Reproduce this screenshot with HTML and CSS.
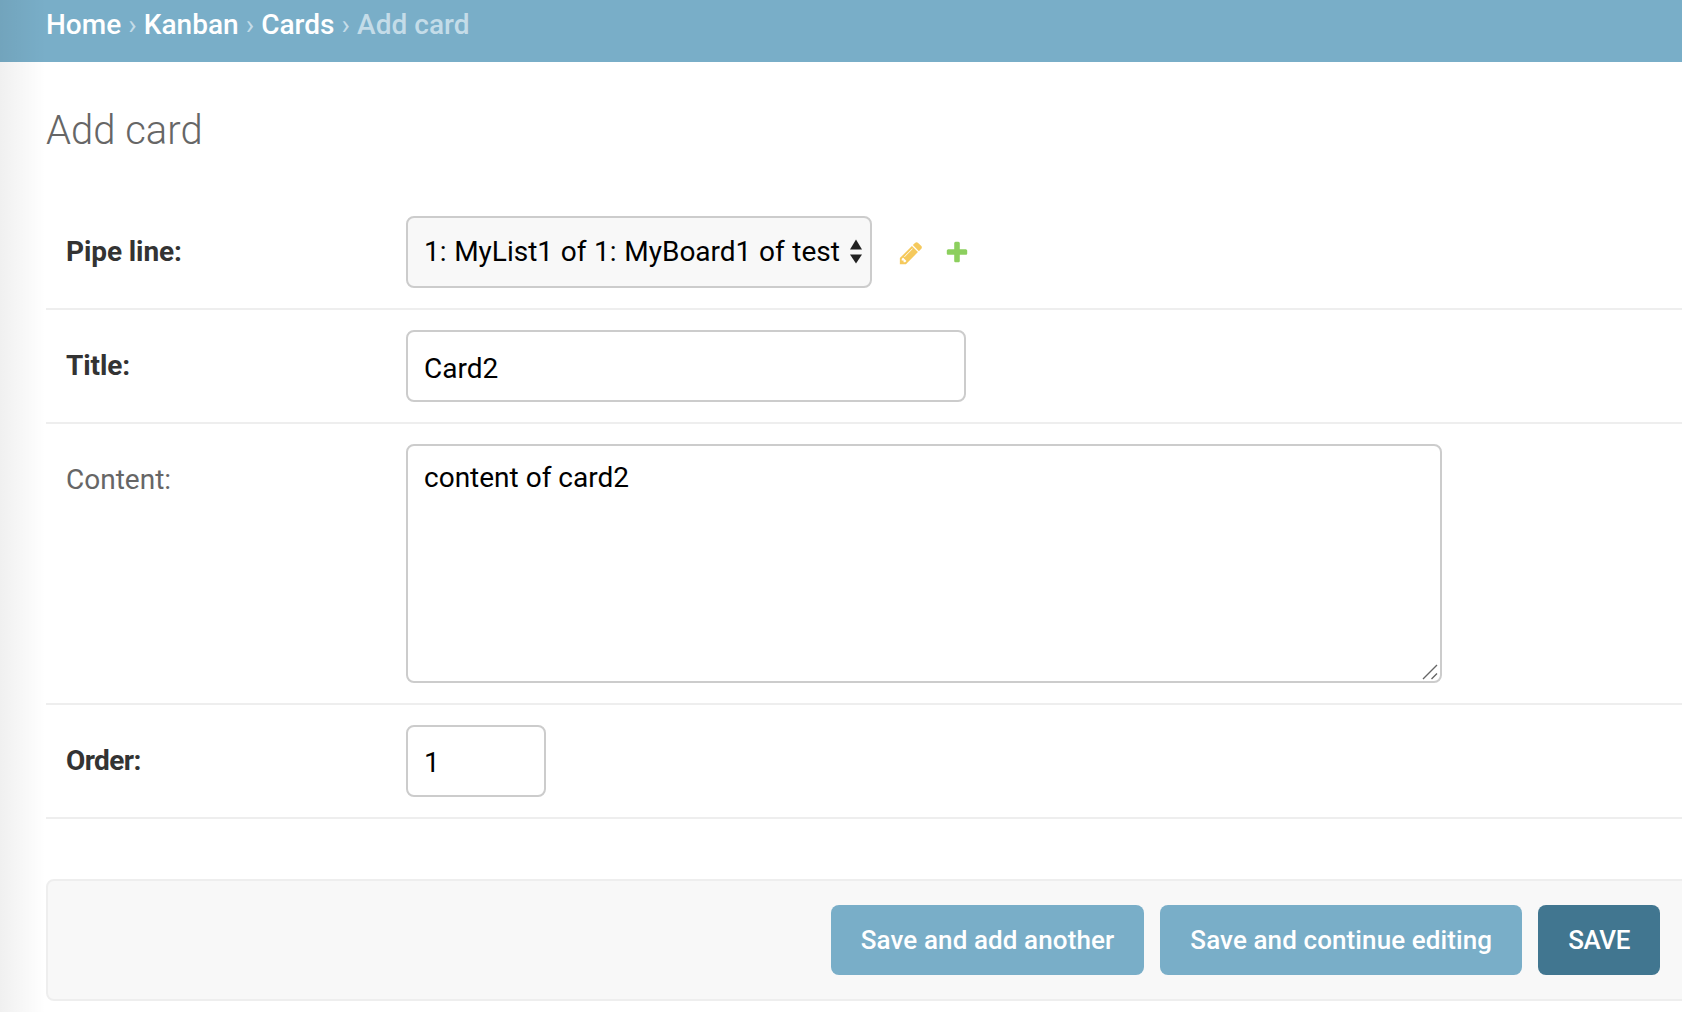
FILE: index.html
```html
<!DOCTYPE html>
<html>
<head>
    <meta charset="UTF-8">
    <meta name="viewport" content="width=device-width, initial-scale=1.0">
    <title>Add card</title>
    <link rel="stylesheet" href="styles.css">
</head>
<body>
    <div class="breadcrumbs">
        <a href="#">Home</a> <span class="sep">›</span>
        <a href="#">Kanban</a> <span class="sep">›</span>
        <a href="#">Cards</a> <span class="sep">›</span>
        <span class="current">Add card</span>
    </div>

    <div class="content">
        <h1>Add card</h1>

        <form>
            <div class="form-row">
                <label class="required">Pipe line:</label>
                <div class="select-wrap">
                    <select class="field field-select">
                        <option>1: MyList1 of 1: MyBoard1 of test</option>
                    </select>
                    <svg class="select-arrows" viewBox="0 0 12 24">
                        <path d="M6 0l6 10H0z"/>
                        <path d="M0 15h12l-6 9z"/>
                    </svg>
                </div>
                <a href="#" class="related related-change"><svg class="icon-change" viewBox="0 0 1792 1792"><path d="M491 1536l91-91-235-235-91 91v107h128v128h107zm523-928q0-22-22-22-10 0-17 7l-542 542q-7 7-7 17 0 22 22 22 10 0 17-7l542-542q7-7 7-17zm-54-192l416 416-832 832h-416v-416zm683 96q0 53-37 90l-166 166-416-416 166-165q36-38 90-38 53 0 91 38l235 234q37 39 37 91z"/></svg></a>
                <a href="#" class="related"><svg class="icon-add" viewBox="0 0 1792 1792"><path d="M1600 736v192q0 40-28 68t-68 28h-416v416q0 40-28 68t-68 28h-192q-40 0-68-28t-28-68v-416h-416q-40 0-68-28t-28-68v-192q0-40 28-68t68-28h416v-416q0-40 28-68t68-28h192q40 0 68 28t28 68v416h416q40 0 68 28t28 68z"/></svg></a>
            </div>

            <div class="form-row">
                <label class="required">Title:</label>
                <input class="field field-title" type="text" value="Card2">
            </div>

            <div class="form-row row-top">
                <label class="label-content">Content:</label>
                <div class="textarea-wrap">
                    <textarea class="field field-content">content of card2</textarea>
                    <svg class="grip" viewBox="0 0 16 16">
                        <path d="M1 15L15 1M9.5 15L15 9.5"/>
                    </svg>
                </div>
            </div>

            <div class="form-row">
                <label class="required label-order">Order:</label>
                <input class="field field-order" type="number" value="1">
            </div>

            <div class="submit-row">
                <button type="button" class="btn">Save and add another</button>
                <button type="button" class="btn">Save and continue editing</button>
                <button type="button" class="btn btn-default">SAVE</button>
            </div>
        </form>
    </div>
</body>
</html>
```

FILE: styles.css
```css
* {
    margin: 0;
    padding: 0;
    box-sizing: border-box;
}

html, body {
    height: 100%;
    overflow: hidden;
}

body {
    position: relative;
    font-family: Roboto, 'Liberation Sans', sans-serif;
    font-size: 28px;
    color: #333;
    background: #fff;
}

/* soft shadow down the left edge, lies over everything */
body::before {
    content: '';
    position: absolute;
    top: 0;
    bottom: 0;
    left: 0;
    width: 46px;
    background: linear-gradient(90deg, rgba(0, 0, 0, 0.06), rgba(0, 0, 0, 0));
    pointer-events: none;
}

.breadcrumbs {
    height: 62px;
    padding-left: 46px;
    line-height: 50px;
    background: #79aec8;
    color: #c4dce8;
    white-space: nowrap;
    word-spacing: 0.15px;
}

.breadcrumbs a {
    color: #fff;
    text-decoration: none;
    font-weight: 500;
}

.breadcrumbs .current {
    font-weight: 500;
}

.content {
    width: 1690px;
    padding-left: 46px;
}

h1 {
    height: 134px;
    padding-top: 45px;
    font-size: 40px;
    line-height: 48px;
    font-weight: 300;
    color: #666;
}

.form-row {
    display: flex;
    align-items: center;
    padding: 20px;
    border-bottom: 2px solid #eee;
}

.form-row.row-top {
    align-items: flex-start;
}

label {
    flex: none;
    width: 340px;
    color: #666;
}

label.required {
    margin-bottom: 2px;
    color: #333;
    font-weight: 700;
    letter-spacing: -0.1px;
}

label.label-order {
    letter-spacing: -0.6px;
}

.label-content {
    padding-top: 19px;
}

.field {
    display: block;
    height: 72px;
    padding: 0 16px;
    border: 2px solid #ccc;
    border-radius: 8px;
    background: #fff;
    color: #000;
    font-family: inherit;
    font-size: 28px;
    outline: none;
}

.select-wrap {
    position: relative;
}

.field-select {
    width: 466px;
    padding-bottom: 2px;
    appearance: none;
    background: #f8f8f8;
    word-spacing: 0.7px;
}

.select-arrows {
    position: absolute;
    top: 23px;
    left: 444px;
    width: 12px;
    height: 25px;
    fill: #222;
}

.related {
    display: flex;
    margin-left: 20px;
}

.related-change {
    margin-left: 26px;
}

.related svg {
    display: block;
    width: 26px;
    height: 26px;
    margin-top: 2px;
}

.icon-change {
    fill: #f5c95c;
}

.icon-add {
    fill: #8ccf5e;
}

.field-title {
    width: 560px;
    padding-top: 4px;
}

.textarea-wrap {
    position: relative;
}

.field-content {
    width: 1036px;
    height: 239px;
    padding: 16px;
    line-height: 32px;
    resize: none;
}

.grip {
    position: absolute;
    right: 4px;
    bottom: 3px;
    width: 16px;
    height: 16px;
    fill: none;
    stroke: #666;
    stroke-width: 1.4;
}

.field-order {
    width: 140px;
    padding-top: 2px;
}

.submit-row {
    display: flex;
    justify-content: flex-end;
    gap: 16px;
    margin-top: 60px;
    padding: 24px 28px;
    background: #f8f8f8;
    border: 2px solid #eee;
    border-radius: 8px;
}

.btn {
    height: 70px;
    padding: 0 30px;
    border: none;
    border-radius: 8px;
    background: #79aec8;
    color: #fff;
    font-family: inherit;
    font-size: 26px;
    font-weight: 500;
    letter-spacing: 0.1px;
}

.btn-default {
    background: #417690;
    letter-spacing: -0.4px;
}
```
